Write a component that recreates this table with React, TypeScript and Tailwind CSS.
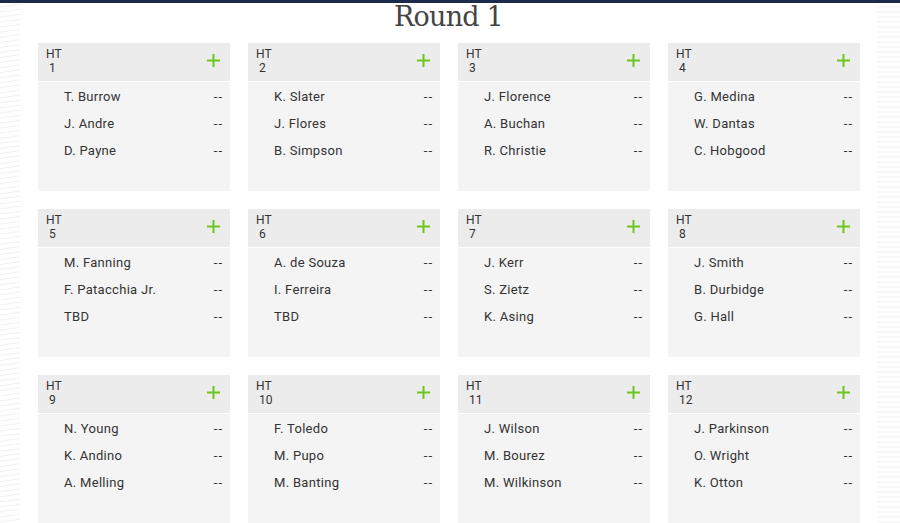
import React from "react";

type Heat = { id: number; surfers: string[] };

const heats: Heat[] = [
  { id: 1, surfers: ["T. Burrow", "J. Andre", "D. Payne"] },
  { id: 2, surfers: ["K. Slater", "J. Flores", "B. Simpson"] },
  { id: 3, surfers: ["J. Florence", "A. Buchan", "R. Christie"] },
  { id: 4, surfers: ["G. Medina", "W. Dantas", "C. Hobgood"] },
  { id: 5, surfers: ["M. Fanning", "F. Patacchia Jr.", "TBD"] },
  { id: 6, surfers: ["A. de Souza", "I. Ferreira", "TBD"] },
  { id: 7, surfers: ["J. Kerr", "S. Zietz", "K. Asing"] },
  { id: 8, surfers: ["J. Smith", "B. Durbidge", "G. Hall"] },
  { id: 9, surfers: ["N. Young", "K. Andino", "A. Melling"] },
  { id: 10, surfers: ["F. Toledo", "M. Pupo", "M. Banting"] },
  { id: 11, surfers: ["J. Wilson", "M. Bourez", "M. Wilkinson"] },
  { id: 12, surfers: ["J. Parkinson", "O. Wright", "K. Otton"] },
];

const PlusIcon = () => (
  <svg width="13" height="13" viewBox="0 0 13 13" className="shrink-0">
    <rect x="5.5" y="0" width="2" height="13" fill="#6cc51c" />
    <rect x="0" y="5.5" width="13" height="2" fill="#6cc51c" />
  </svg>
);

const HeatCard = ({ heat }: { heat: Heat }) => {
  return (
    <div className="h-[148px] bg-[#f4f4f4] flex flex-col">
      <div className="h-[39px] shrink-0 bg-[#ececec] border-b border-white flex items-start justify-between pl-[8px] pr-[10px] pt-[4px]">
        <div className="text-[12px] leading-[14px] text-[#333]">
          <div>HT</div>
          <div className="pl-[3px]">{heat.id}</div>
        </div>
        <div className="pt-[7px]">
          <PlusIcon />
        </div>
      </div>
      <div className="flex flex-col pt-[1px]">
        {heat.surfers.map((name, i) => (
          <div
            key={i}
            className="h-[27px] flex items-center justify-between pl-[26px] pr-[7px] text-[13px] text-[#333] tracking-[0.3px]"
          >
            <span>{name}</span>
            <span className="tracking-[1px]">--</span>
          </div>
        ))}
      </div>
    </div>
  );
};

export default function App() {
  return (
    <div
      className="w-[900px] h-[523px] overflow-hidden bg-white flex flex-col"
      style={{ fontFamily: "Roboto, 'Noto Sans', sans-serif" }}
    >
      <div className="h-[3px] bg-[#1c2b4b] shrink-0" />
      <div className="flex flex-1 min-h-0">
        <div className="w-[20px] shrink-0 bg-[repeating-linear-gradient(172deg,#ffffff_0px,#ffffff_3px,#f1f1f1_4px,#ffffff_5px)]" />
        <div className="flex-1 flex flex-col">
          <h1 className="h-[40px] shrink-0 text-center text-[27px] leading-[28px] text-[#444] font-[DejaVu_Serif,serif] tracking-[-0.8px]">
            Round 1
          </h1>
          <div className="grid grid-cols-[repeat(4,192px)] gap-x-[18px] gap-y-[18px] pl-[18px]">
            {heats.map((h) => (
              <HeatCard key={h.id} heat={h} />
            ))}
          </div>
        </div>
        <div className="w-[23px] shrink-0 bg-[repeating-linear-gradient(180deg,#ffffff_0px,#ffffff_3px,#f1f1f1_4px,#ffffff_5px)]" />
      </div>
    </div>
  );
}
